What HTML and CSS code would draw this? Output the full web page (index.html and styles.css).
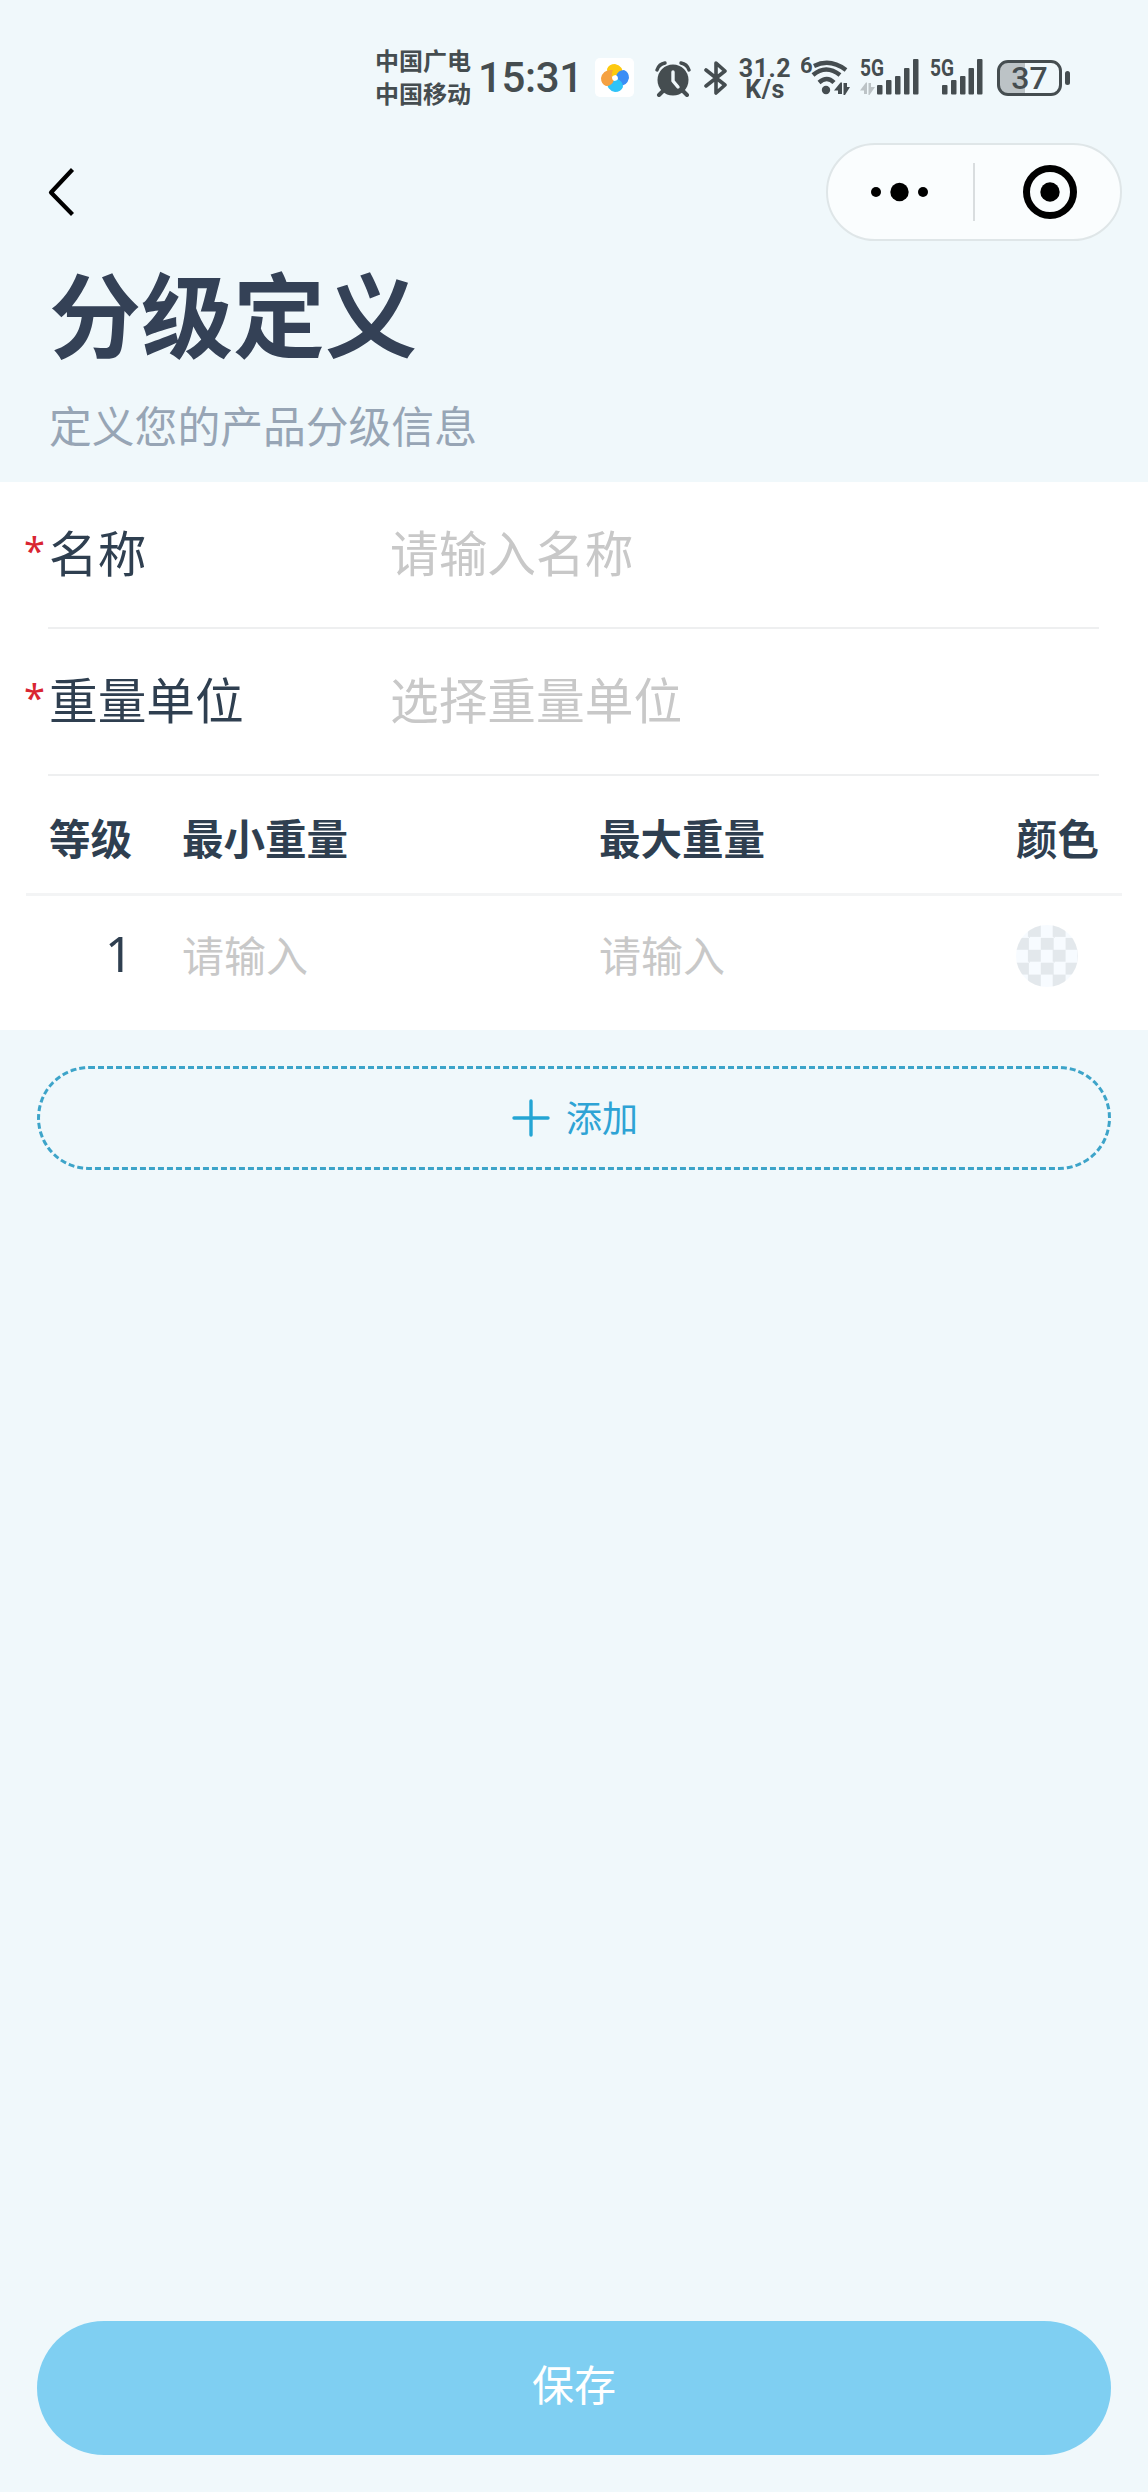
FILE: index.html
```html
<!DOCTYPE html>
<html lang="zh-CN">
<head>
    <meta charset="UTF-8">
    <meta name="viewport" content="width=device-width, initial-scale=1.0">
    <title>分级定义</title>
    <link rel="stylesheet" href="styles.css">
</head>
<body>
    <div class="page">
        <div class="status-bar">
            <div class="carriers">
                <span>中国广电</span>
                <span>中国移动</span>
            </div>
            <svg class="clock" width="108" height="56" viewBox="0 0 108 56">
                <text x="0" y="39" textLength="105" lengthAdjust="spacing">15:31</text>
            </svg>
            <div class="app-icon">
                <svg width="30" height="30" viewBox="-15 -15 30 30">
                    <path fill="#fdc90f" d="M-8-9Q-6-14 0-14Q9-12 8-2Q2-5-2-1Q-8-3-8-9z"/>
                    <path fill="#3b8df5" transform="rotate(90)" d="M-8-9Q-6-14 0-14Q9-12 8-2Q2-5-2-1Q-8-3-8-9z"/>
                    <path fill="#2fc3f8" transform="rotate(180)" d="M-8-9Q-6-14 0-14Q9-12 8-2Q2-5-2-1Q-8-3-8-9z"/>
                    <path fill="#f5a142" transform="rotate(270)" d="M-8-9Q-6-14 0-14Q9-12 8-2Q2-5-2-1Q-8-3-8-9z"/>
                    <circle r="2.8" fill="#fff"/>
                </svg>
            </div>
            <svg class="alarm" width="36" height="36" viewBox="0 0 36 36">
                <circle cx="18" cy="19" r="15.5" fill="#454d50"/>
                <path d="M2 9Q4 3 10 2M34 9Q32 3 26 2" stroke="#454d50" stroke-width="3.4" fill="none" stroke-linecap="round"/>
                <path d="M8 30l-4 4M28 30l4 4" stroke="#454d50" stroke-width="4" stroke-linecap="round"/>
                <path d="M18 11v9l5 6" stroke="#f0f8fb" stroke-width="3.4" fill="none" stroke-linecap="round" stroke-linejoin="round"/>
            </svg>
            <svg class="bluetooth" width="24" height="36" viewBox="0 0 24 36">
                <path d="M2 10l19 15-9 8V3l9 8L2 26" stroke="#454d50" stroke-width="3.6" fill="none" stroke-linecap="round" stroke-linejoin="round"/>
            </svg>
            <div class="speed">
                <span>31.2</span>
                <span>K/s</span>
            </div>
            <svg class="wifi" width="50" height="48" viewBox="0 0 50 48">
                <text x="-1" y="19" font-size="22">6</text>
                <path d="M13 12q16-8 32 4M12 21q13-11 27 0M18 28.500q8-7 15 0" stroke="#454d50" stroke-width="4.400" fill="none"/>
                <circle cx="25" cy="36" r="4.200" fill="#454d50"/>
                <path d="M33 36.500l6.500-8h1.500V40h-4v-3.500zM42.500 29h3.500v4h3l-5 8h-1.500z" fill="#454d50"/>
            </svg>
            <svg class="signal" width="60" height="48" viewBox="0 0 60 48">
                <text x="0" y="22" textLength="24" lengthAdjust="spacingAndGlyphs">5G</text>
                <path d="M0 36.500l6-8h1V40H4v-3.500zM8.500 29H11v4h4l-5.500 8h-1z" fill="#bcc3c6"/>
                <g fill="#454d50">
                    <rect x="17" y="31" width="5.500" height="9.500" rx="1"/>
                    <rect x="26" y="26" width="5.500" height="14.500" rx="1"/>
                    <rect x="35" y="22" width="5.500" height="18.500" rx="1"/>
                    <rect x="44" y="14" width="5.500" height="26.500" rx="1"/>
                    <rect x="53" y="5" width="5.500" height="35.500" rx="1"/>
                </g>
            </svg>
            <svg class="signal signal-second" width="54" height="48" viewBox="0 0 54 48">
                <text x="0" y="22" textLength="24" lengthAdjust="spacingAndGlyphs">5G</text>
                <g fill="#454d50">
                    <rect x="12" y="31" width="5.500" height="9.500" rx="1"/>
                    <rect x="21" y="26" width="5.500" height="14.500" rx="1"/>
                    <rect x="30" y="22" width="5.500" height="18.500" rx="1"/>
                    <rect x="38.500" y="14" width="5.500" height="26.500" rx="1"/>
                    <rect x="47" y="5" width="5.500" height="35.500" rx="1"/>
                </g>
            </svg>
            <div class="battery"><span>37</span></div>
            <div class="battery-tip"></div>
        </div>

        <div class="nav-bar">
            <svg class="back" width="30" height="50" viewBox="0 0 30 50">
                <path d="M25.500 2.500L4 25.500l21.500 22" stroke="#000" stroke-width="4.200" fill="none" stroke-linejoin="round"/>
            </svg>
            <div class="capsule">
                <svg class="more" width="60" height="20" viewBox="0 0 60 20">
                    <circle cx="5" cy="10" r="5"/>
                    <circle cx="28.500" cy="10" r="9.200"/>
                    <circle cx="52" cy="10" r="5"/>
                </svg>
                <div class="divider"></div>
                <svg class="close" width="56" height="56" viewBox="0 0 56 56">
                    <circle cx="28" cy="28" r="23.500" fill="none" stroke="#000" stroke-width="7"/>
                    <circle cx="28" cy="28" r="9.700"/>
                </svg>
            </div>
        </div>

        <header class="intro">
            <h1>分级定义</h1>
            <p>定义您的产品分级信息</p>
        </header>

        <div class="form">
            <div class="cell">
                <span class="required">*</span>
                <label>名称</label>
                <span class="placeholder">请输入名称</span>
            </div>
            <div class="cell">
                <span class="required">*</span>
                <label>重量单位</label>
                <span class="placeholder">选择重量单位</span>
            </div>
            <div class="grades">
                <div class="row head">
                    <div>等级</div>
                    <div>最小重量</div>
                    <div>最大重量</div>
                    <div>颜色</div>
                </div>
                <div class="row">
                    <div class="index">1</div>
                    <div class="placeholder">请输入</div>
                    <div class="placeholder">请输入</div>
                    <div class="swatch"></div>
                </div>
            </div>
        </div>

        <div class="add">
            <svg width="38" height="38" viewBox="0 0 38 38">
                <path d="M19 2v34M2 19h34" stroke="#24a5d4" stroke-width="3.400" stroke-linecap="round"/>
            </svg>
            <span>添加</span>
        </div>

        <div class="save">保存</div>
    </div>
</body>
</html>
```
FILE: styles.css
```css
* {
    margin: 0;
    padding: 0;
    box-sizing: border-box;
}

body {
    font-family: "Noto Sans CJK SC", sans-serif;
    background: #f0f8fb;
    color: #2f3f50;
}

.page {
    height: 2492px;
    display: flex;
    flex-direction: column;
    padding-bottom: 37px;
}

svg {
    display: block;
    flex-shrink: 0;
}

/* status bar */
.status-bar {
    height: 120px;
    padding: 43px 0 0 375px;
    display: flex;
    align-items: flex-start;
    color: #454d50;
}

.status-bar text {
    font-family: Roboto, sans-serif;
    font-weight: 700;
    fill: #454d50;
}

.carriers {
    width: 99px;
    font-size: 24px;
    font-weight: 700;
    line-height: 33px;
    display: flex;
    flex-direction: column;
    white-space: nowrap;
}

.clock {
    margin: 10px 0 0 4px;
}

.status-bar .clock text {
    font-size: 42px;
    font-weight: 500;
}

.app-icon {
    width: 39px;
    height: 39px;
    margin: 15px 0 0 9px;
    border-radius: 5px;
    background: #fff;
    display: flex;
    align-items: center;
    justify-content: center;
}

.alarm {
    margin: 18px 0 0 21px;
}

.bluetooth {
    margin: 17px 0 0 13px;
}

.speed {
    width: 54px;
    margin: 15px 0 0 10px;
    display: flex;
    flex-direction: column;
    align-items: center;
    font-family: Roboto, sans-serif;
    font-size: 25px;
    font-weight: 700;
    line-height: 21px;
    letter-spacing: 0.5px;
}

.wifi {
    margin: 11px 0 0 9px;
}

.signal {
    margin: 11px 0 0 9px;
}

.signal text {
    font-size: 23px;
}

.signal-second {
    margin-left: 10px;
}

.battery {
    width: 65px;
    height: 36px;
    margin: 17px 0 0 13px;
    border: 3px solid #454d50;
    border-radius: 11px;
    background: linear-gradient(to right, #bcc3c6 42%, transparent 42%);
    font-family: Roboto, sans-serif;
    font-size: 32px;
    font-weight: 500;
    line-height: 30px;
    text-align: center;
}

.battery-tip {
    width: 5px;
    height: 14px;
    margin: 28px 0 0 3px;
    border-radius: 3px;
    background: #454d50;
}

/* navigation */
.nav-bar {
    height: 144px;
    padding: 23px 26px 23px 47px;
    display: flex;
    align-items: center;
    justify-content: space-between;
}

.capsule {
    width: 296px;
    height: 98px;
    padding: 0 42px 0 43px;
    border: 2px solid #dfe6e8;
    border-radius: 49px;
    background: #fafdfe;
    display: flex;
    align-items: center;
}

.divider {
    width: 2px;
    height: 58px;
    margin: 0 47px 0 42px;
    background: #d9dddf;
}

/* title */
.intro {
    height: 218px;
    padding-left: 49px;
}

.intro h1 {
    margin-top: -6px;
    font-size: 92px;
    font-weight: 700;
    line-height: 106px;
    color: #344156;
}

.intro p {
    margin-top: 35px;
    font-size: 42.800px;
    line-height: 50px;
    color: #97a5b5;
}

/* form */
.form {
    height: 548px;
    background: #fff;
}

.cell {
    height: 147px;
    margin: 0 49px 0 48px;
    padding-bottom: 8px;
    border-bottom: 2px solid #eeeff0;
    display: flex;
    align-items: center;
    font-size: 48.700px;
    line-height: 60px;
}

.required {
    width: 25px;
    margin-left: -24px;
    padding-bottom: 1px;
    font-family: "Noto Sans", sans-serif;
    font-size: 38px;
    color: #d92532;
}

.cell label {
    width: 341px;
}

.placeholder {
    color: #c8c8c8;
}

.grades {
    margin: 0 26px;
}

.row {
    height: 136px;
    padding: 0 20px 0 23px;
    display: grid;
    grid-template-columns: 133px 417px 417px 1fr;
    align-items: center;
    font-size: 42px;
    white-space: nowrap;
}

.row.head {
    height: 120px;
    padding-top: 5px;
    border-bottom: 3px solid #f3f4f5;
    font-size: 41.500px;
    font-weight: 700;
}

.row:not(.head) {
    padding-bottom: 21px;
}

.index {
    width: 84px;
    margin-top: -2px;
    font-family: "Noto Sans", sans-serif;
    font-size: 49px;
    text-align: right;
}

.swatch {
    width: 62px;
    height: 62px;
    margin-top: 4px;
    border-radius: 50%;
    background: repeating-conic-gradient(#e3e8ec 0 25%, #f7fbff 0 50%) 0 0 / 24.800px 24.800px;
}

/* buttons */
.add {
    height: 104px;
    margin: 36px 37px 0;
    border: 3px dashed #3da4c9;
    border-radius: 52px;
    display: flex;
    align-items: center;
    justify-content: center;
    gap: 16px;
    font-size: 36px;
    color: #2ea3d5;
}

.add span {
    margin: -5px -2px 0 0;
}

.save {
    height: 134px;
    margin: auto 37px 0;
    border-radius: 67px;
    background: #7fcff2;
    color: #fff;
    font-size: 42px;
    line-height: 123px;
    text-align: center;
}
```
